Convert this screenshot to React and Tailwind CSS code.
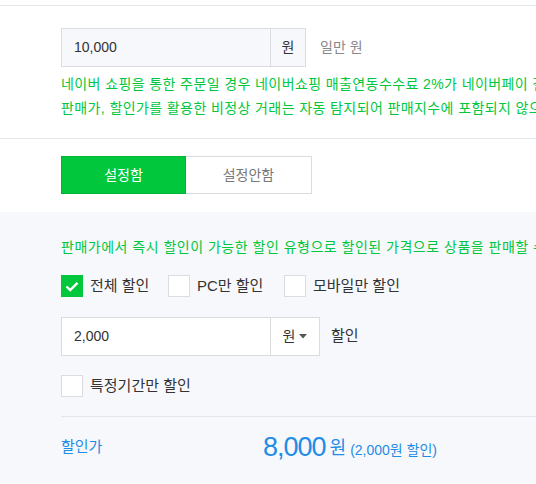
import React from "react";

const font = { fontFamily: '"Liberation Sans", "Noto Sans CJK KR", sans-serif' };

function Checkbox({ checked, label }) {
  return (
    <label className="flex items-center gap-[7px] text-[15px] text-[#333]">
      {checked ? (
        <span className="flex h-[22px] w-[22px] items-center justify-center bg-[#00c73c]">
          <svg width="14" height="11" viewBox="0 0 14 11" fill="none">
            <path d="M1.5 5.5 L5.2 9 L12.5 1.8" stroke="white" strokeWidth="2.4" />
          </svg>
        </span>
      ) : (
        <span className="h-[22px] w-[22px] border border-[#dadce0] bg-white" />
      )}
      <span>{label}</span>
    </label>
  );
}

export default function App() {
  return (
    <div className="min-h-screen w-[536px] overflow-hidden bg-white" style={font}>
      <div className="h-[5px]" />
      <section className="border-t border-b border-[#e4e5ea] pb-[18px] pl-[61px] pt-[22px]">
        <div className="flex items-center">
          <div className="flex h-[39px] border border-[#dadce0] bg-[#f7f8fb] text-[14px] text-[#333]">
            <div className="flex w-[208px] items-center pl-[12px]">10,000</div>
            <div className="flex w-[35px] items-center justify-center border-l border-[#dadce0]">원</div>
          </div>
          <span className="ml-[14px] text-[14px] text-[#888]">일만 원</span>
        </div>
        <div className="mt-[5px] whitespace-nowrap text-[14px] leading-[24px] tracking-[0.4px] text-[#00c73c]">
          <p>네이버 쇼핑을 통한 주문일 경우 네이버쇼핑 매출연동수수료 2%가 네이버페이 결제수수료와 별도로 과금됩니다.</p>
          <p>판매가, 할인가를 활용한 비정상 거래는 자동 탐지되어 판매지수에 포함되지 않으며, 위반 시 제재될 수 있습니다.</p>
        </div>
      </section>

      <section className="pb-[18px] pl-[61px] pt-[17px]">
        <div className="flex h-[38px] text-[14px]">
          <button className="w-[125px] border border-[#00b533] bg-[#00c73c] text-white">설정함</button>
          <button className="w-[126px] border border-l-0 border-[#dadce0] bg-white text-[#777]">설정안함</button>
        </div>
      </section>

      <section className="bg-[#f7f8fc] pb-[20px] pl-[61px] pt-[26px]">
        <p className="whitespace-nowrap text-[14px] leading-[18px] tracking-[0.5px] text-[#00c73c]">
          판매가에서 즉시 할인이 가능한 할인 유형으로 할인된 가격으로 상품을 판매할 수 있습니다.
        </p>
        <div className="mt-[19px] flex items-center">
          <div className="w-[107px]">
            <Checkbox checked label="전체 할인" />
          </div>
          <div className="w-[116px]">
            <Checkbox label="PC만 할인" />
          </div>
          <Checkbox label="모바일만 할인" />
        </div>
        <div className="mt-[19px] flex items-center">
          <div className="flex h-[39px] border border-[#dadce0] bg-white text-[14px] text-[#333]">
            <div className="flex w-[208px] items-center pl-[12px]">2,000</div>
            <div className="flex w-[49px] items-center justify-center gap-[4px] border-l border-[#dadce0]">
              <span>원</span>
              <svg width="8" height="5" viewBox="0 0 8 5">
                <path d="M0 0 L8 0 L4 4.5 Z" fill="#555" />
              </svg>
            </div>
          </div>
          <span className="ml-[11px] text-[15px] text-[#333]">할인</span>
        </div>
        <div className="mt-[19px]">
          <Checkbox label="특정기간만 할인" />
        </div>
        <div className="mt-[19px] border-t border-[#e4e5ea]" />
        <div className="flex items-center pt-[12px]">
          <span className="w-[202px] text-[15px] text-[#1f8ce6]">할인가</span>
          <span className="text-[27px] leading-[36px] tracking-[-1px] text-[#1f8ce6]">8,000</span>
          <span className="ml-[4px] mt-[3px] text-[18px] text-[#1f8ce6]">원</span>
          <span className="ml-[4px] mt-[6px] text-[14px] text-[#1f8ce6]">(2,000원 할인)</span>
        </div>
      </section>
    </div>
  );
}
